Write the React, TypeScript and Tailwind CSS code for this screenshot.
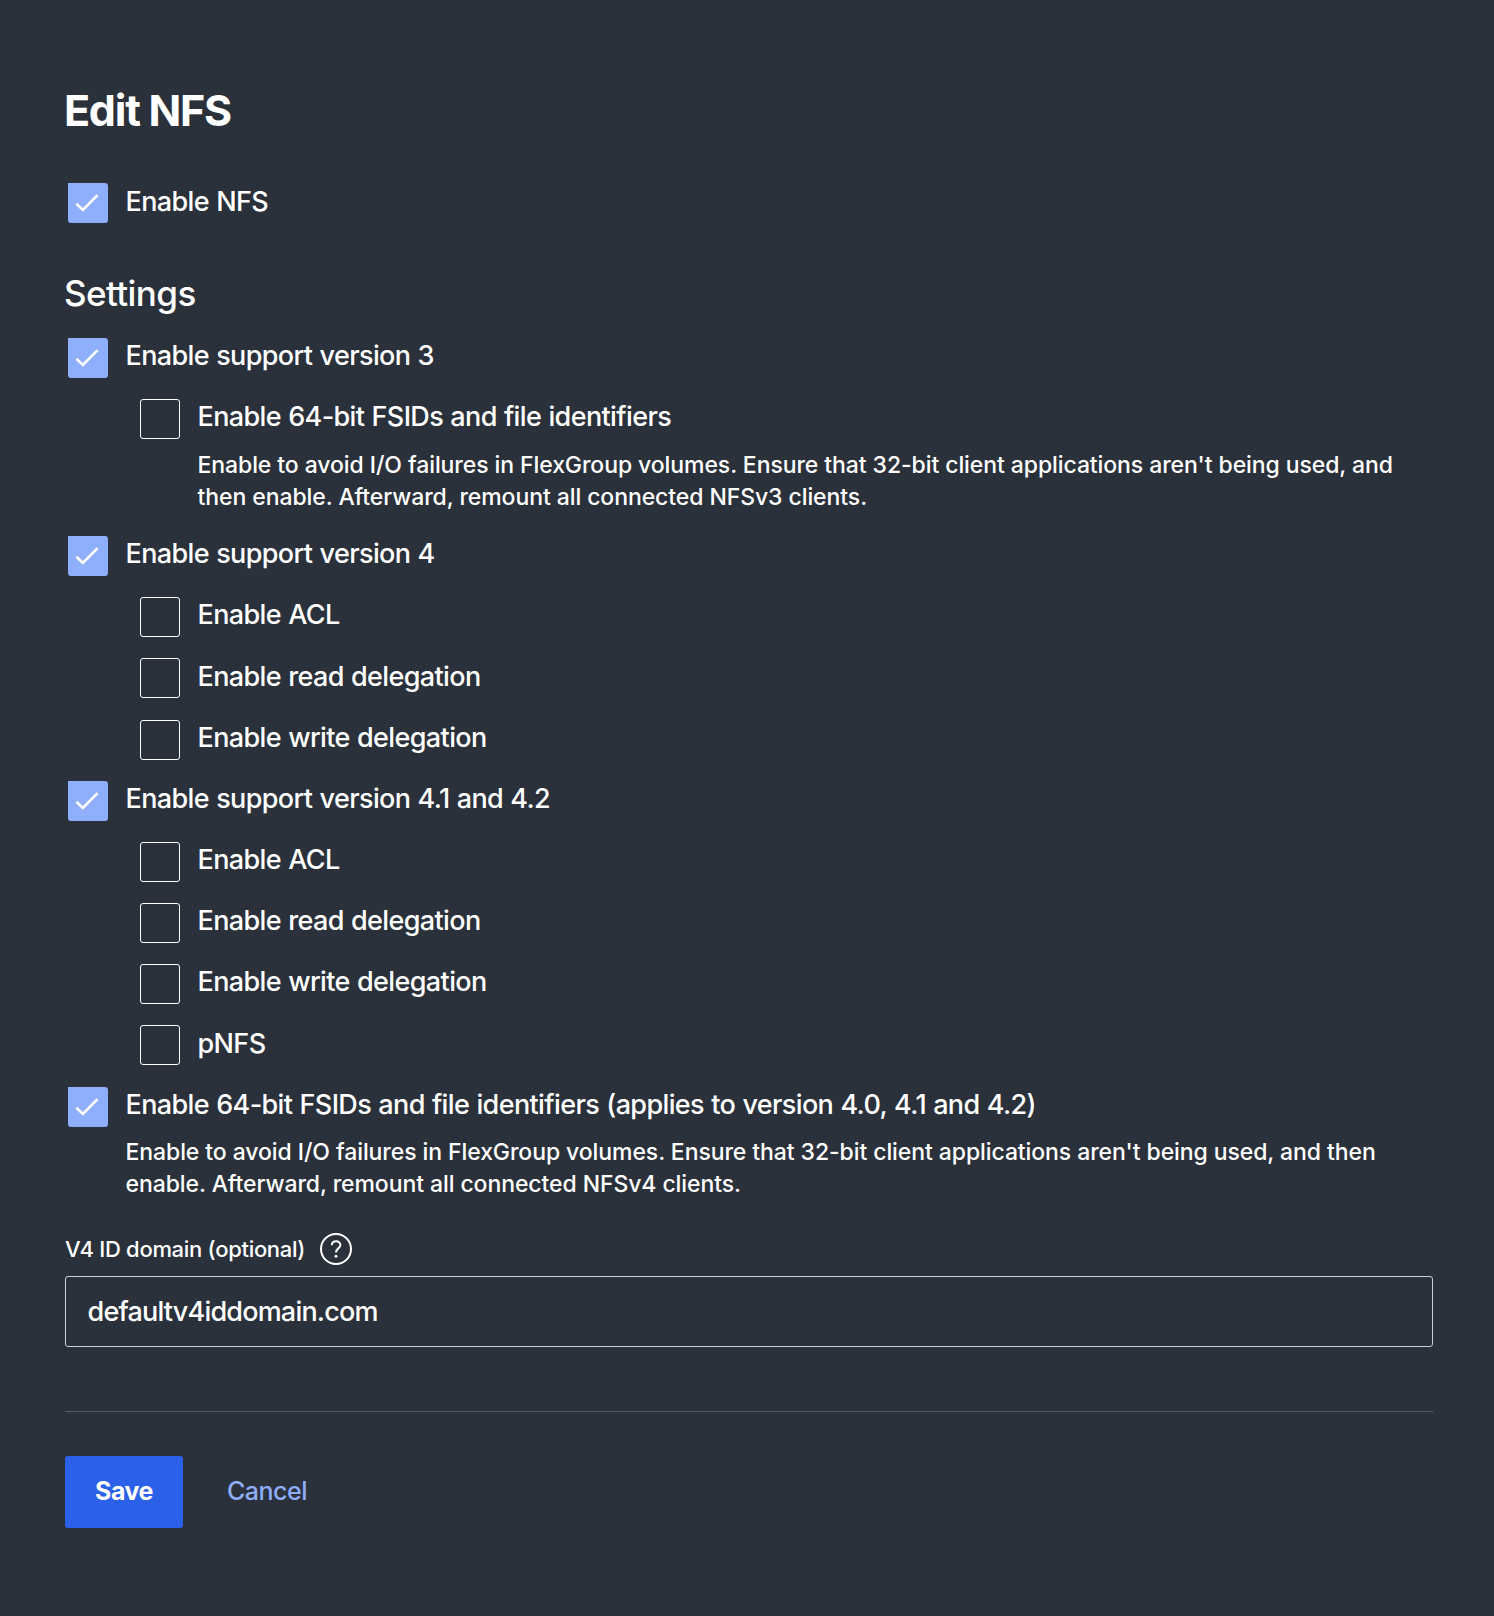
import React from 'react';

function Box({ checked }: { checked?: boolean }) {
  if (!checked) {
    return <span className="block h-10 w-10 shrink-0 rounded-[3px] border border-white" />;
  }
  return (
    <span className="block h-10 w-10 shrink-0 rounded-[3px] rounded-tl-none bg-[#8faefb]">
      <svg viewBox="0 0 40 40" className="h-10 w-10" fill="none" stroke="#fff" strokeWidth="2.6">
        <path d="M8.4 20.8 L14.9 27 L29.6 12.2" />
      </svg>
    </span>
  );
}

function Option({ label, checked, nested }: { label: string; checked?: boolean; nested?: boolean }) {
  return (
    <label className={nested ? 'flex h-[61.2px] items-start pl-[75px]' : 'flex h-[61.2px] items-start pl-[3px]'}>
      <Box checked={checked} />
      <span className="ml-[17.5px] mt-[0.2px] whitespace-nowrap text-[27px] leading-[36.4px] tracking-[-0.62px] [word-spacing:0.6px]">{label}</span>
    </label>
  );
}

export default function App() {
  return (
    <main className="h-[1616px] w-[1494px] bg-[#2b313b] pl-[65px] pr-[61px] pt-[82px] font-['Inter',sans-serif] font-[450] text-white">
      <h1 className="-ml-px h-[101.4px] text-[43px] font-bold leading-[56px] tracking-[-1.25px]">Edit NFS</h1>
      <Option label="Enable NFS" checked />
      <h2 className="-ml-px mt-[25px] h-[68.4px] text-[35px] leading-[46px] tracking-[-0.6px]">Settings</h2>
      <Option label="Enable support version 3" checked />
      <Option label="Enable 64-bit FSIDs and file identifiers" nested />
      <p className="-mt-[11.5px] h-[87.1px] pl-[132.5px] text-[23px] leading-[32.4px] tracking-[-0.083px] whitespace-nowrap">
        Enable to avoid I/O failures in FlexGroup volumes. Ensure that 32-bit client applications aren't being used, and
        <br />
        then enable. Afterward, remount all connected NFSv3 clients.
      </p>
      <Option label="Enable support version 4" checked />
      <Option label="Enable ACL" nested />
      <Option label="Enable read delegation" nested />
      <Option label="Enable write delegation" nested />
      <Option label="Enable support version 4.1 and 4.2" checked />
      <Option label="Enable ACL" nested />
      <Option label="Enable read delegation" nested />
      <Option label="Enable write delegation" nested />
      <Option label="pNFS" nested />
      <Option label="Enable 64-bit FSIDs and file identifiers (applies to version 4.0, 4.1 and 4.2)" checked />
      <p className="-mt-[12px] h-[97px] pl-[60.5px] text-[23px] leading-[32.5px] tracking-[-0.083px] whitespace-nowrap">
        Enable to avoid I/O failures in FlexGroup volumes. Ensure that 32-bit client applications aren't being used, and then
        <br />
        enable. Afterward, remount all connected NFSv4 clients.
      </p>
      <div className="flex h-[43px] items-start gap-[15px]">
        <span className="text-[22px] leading-[32px] tracking-[-0.3px]">V4 ID domain (optional)</span>
        <svg viewBox="0 0 32 32" className="h-8 w-8" fill="none" stroke="#fff" strokeWidth="2">
          <circle cx="16" cy="16" r="15" />
          <path d="M11.8 12.2 C12 7.1 20.4 7.1 20.4 12 C20.4 15.4 16 15.4 16 19.4" />
          <circle cx="16" cy="23.2" r="1.5" fill="#fff" stroke="none" />
        </svg>
      </div>
      <input
        className="block h-[71px] w-full rounded-[3px] border border-[#c8d0d8] bg-transparent px-[21.5px] text-[27px] tracking-[-0.8px] outline-none"
        defaultValue="defaultv4iddomain.com"
      />
      <hr className="mt-[64px] border-t border-[#535864]" />
      <div className="mt-[44px] flex items-center">
        <button className="h-[72px] w-[118px] rounded-[3px] bg-[#2b60e8] text-[25px] font-bold tracking-[-0.5px]">Save</button>
        <button className="mb-px ml-11 text-[25px] tracking-[-0.5px] text-[#8faefb]">Cancel</button>
      </div>
    </main>
  );
}
